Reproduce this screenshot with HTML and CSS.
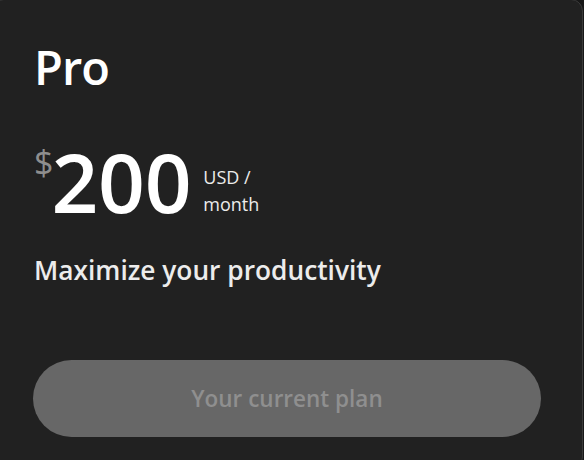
FILE: index.html
```html
<!DOCTYPE html>
<html lang="en">
<head>
<meta charset="utf-8">
<title>Pro plan</title>
<link rel="stylesheet" href="styles.css">
</head>
<body>
<section class="card">
  <h1 class="plan-name">Pro</h1>
  <div class="price-row">
    <span class="currency">$</span>
    <span class="amount">200</span>
    <span class="period">USD /<br>month</span>
  </div>
  <p class="tagline">Maximize your productivity</p>
  <button class="plan-button" disabled>Your current plan</button>
</section>
</body>
</html>
```

FILE: styles.css
```css
html, body {
  margin: 0;
  padding: 0;
  height: 100%;
}

body {
  background: #171717;
  font-family: "Open Sans", "Noto Sans", sans-serif;
  overflow: hidden;
}

.card {
  box-sizing: border-box;
  margin-top: -1px;
  margin-left: -8px;
  width: 591px;
  height: 470px;
  background: #212121;
  border: 1px solid #3a3a3a;
  border-radius: 12px;
  padding: 39px 41px 0 42px;
  display: flex;
  flex-direction: column;
  color: #ffffff;
}

.plan-name {
  margin: 0 0 0 -1px;
  font-size: 47px;
  line-height: 56px;
  font-weight: 600;
  letter-spacing: -1px;
}

.price-row {
  margin-top: 45px;
  display: flex;
  align-items: flex-start;
  height: 82px;
}

.currency {
  flex: 0 0 17.5px;
  width: 17.5px;
  overflow: visible;
  white-space: nowrap;
  font-size: 34px;
  line-height: 34px;
  color: #8e8e8e;
  margin-top: 5px;
  margin-left: -1px;
}

.amount {
  font-size: 82px;
  line-height: 82px;
  font-weight: 600;
  letter-spacing: -0.3px;
}

.period {
  margin-left: 12px;
  margin-top: 24px;
  font-size: 18px;
  line-height: 27px;
  color: #ececec;
}

.tagline {
  margin: 32px 0 0 -1px;
  font-size: 26.3px;
  line-height: 32px;
  font-weight: 600;
  color: #ececec;
}

.plan-button {
  margin-top: 74px;
  margin-left: -2px;
  width: 508px;
  height: 77px;
  border: none;
  border-radius: 999px;
  background: #676767;
  color: #8f8f8f;
  font-family: inherit;
  font-size: 22.5px;
  font-weight: 600;
  padding: 0;
}
```
